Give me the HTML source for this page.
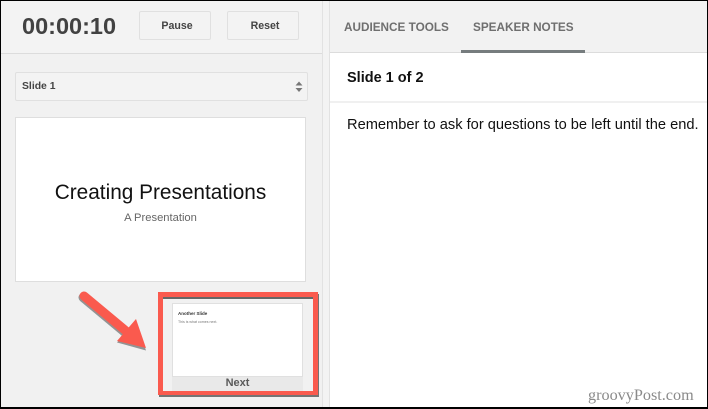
<!DOCTYPE html>
<html><head><meta charset="utf-8">
<style>
html,body{margin:0;padding:0;width:708px;height:409px;overflow:hidden;background:#fff}
body{position:relative;font-family:"Liberation Sans",sans-serif}
div{position:absolute;box-sizing:border-box;white-space:nowrap}
.btn{background:#f3f3f3;border:1px solid #e0e0e0;border-radius:2px;font-size:10.6px;font-weight:bold;color:#444;text-align:center}
</style></head><body>
<div style="left:0;top:0;width:322px;height:409px;background:#f1f1f1"></div>
<div style="left:322px;top:0;width:8px;height:409px;background:#f3f3f3;border-left:1px solid #e2e2e2;border-right:1px solid #e2e2e2"></div>
<div style="left:330px;top:0;width:378px;height:53px;background:#f2f2f2;border-bottom:1px solid #dcdcdc"></div>
<div style="left:0;top:0;width:322px;height:54px;border-bottom:1px solid #dcdcdc;background:#f3f3f3"></div>

<div style="left:22px;top:11px;font-size:23.5px;line-height:30px;font-weight:bold;color:#424242">00:00:10</div>
<div class="btn" style="left:139px;top:11px;width:72px;height:29px;line-height:28px;padding-left:4px">Pause</div>
<div class="btn" style="left:227px;top:11px;width:72px;height:29px;line-height:28px;padding-left:4px">Reset</div>

<div class="btn" style="left:15px;top:72px;width:293px;height:29px;line-height:28px;text-align:left;padding-left:6px;font-size:10.4px">Slide 1</div>
<svg style="position:absolute;left:293px;top:80px" width="12" height="14" viewBox="0 0 12 14"><path d="M2.5 5.5L6 1.5 9.5 5.5Z M2.5 8L6 12 9.5 8Z" fill="#777"/></svg>

<div style="left:15px;top:117px;width:291px;height:165px;background:#fff;border:1px solid #dedede"></div>
<div style="left:15px;top:180px;width:291px;text-align:center;font-size:20.8px;line-height:26px;color:#111">Creating Presentations</div>
<div style="left:15px;top:211px;width:291px;text-align:center;font-size:11.2px;line-height:15px;color:#666">A Presentation</div>

<svg style="position:absolute;left:70px;top:285px" width="90" height="70" viewBox="0 0 90 70">
<path d="M14 11L56 46" stroke="#555" stroke-width="9" stroke-linecap="round" fill="none" opacity=".6" transform="translate(-1 1.5)"/>
<path d="M66 34L47 56 76 64Z" fill="#555" opacity=".6" transform="translate(0 1.5)"/>
<path d="M14 11L56 46" stroke="#fa5a4e" stroke-width="9" stroke-linecap="round" fill="none"/>
<path d="M66 34L47 56 76 63Z" fill="#fa5a4e"/>
</svg>

<div style="left:159px;top:294px;width:160px;height:103px;background:#555;opacity:.8"></div>
<div style="left:163px;top:297px;width:150px;height:94px;background:#f1f1f1"></div>
<div style="left:163px;top:297px;width:150px;height:2px;background:#666"></div>
<div style="left:172px;top:303px;width:131px;height:74px;background:#fff;border:1px solid #e0e0e0"></div>
<div style="left:178px;top:311px;font-size:4.5px;line-height:6px;color:#333;font-weight:bold">Another Slide</div>
<div style="left:178px;top:320px;font-size:3.6px;line-height:5px;color:#777">This is what comes next.</div>
<div style="left:172px;top:377px;width:131px;height:14px;background:#e9e9e9;text-align:center;font-size:11px;line-height:13px;font-weight:bold;color:#5a5a5a">Next</div>
<div style="left:158px;top:292px;width:160px;height:103px;border:5px solid #fa5a4e;border-bottom-width:4px"></div>

<div style="left:344px;top:20px;font-size:11.75px;line-height:15px;font-weight:bold;color:#6f6f6f">AUDIENCE TOOLS</div>
<div style="left:473px;top:20px;font-size:11.75px;line-height:15px;font-weight:bold;color:#6f6f6f">SPEAKER NOTES</div>
<div style="left:461px;top:50px;width:124px;height:3px;background:#767c7e"></div>

<div style="left:347px;top:70px;font-size:14.5px;line-height:17px;font-weight:bold;color:#111">Slide 1 of 2</div>
<div style="left:330px;top:101px;width:378px;height:2px;background:#f0f0f0"></div>
<div style="left:347px;top:117px;font-size:14.65px;line-height:17px;color:#111">Remember to ask for questions to be left until the end.</div>

<div style="left:588px;top:386px;font-family:'Liberation Serif',serif;font-size:16.2px;line-height:18px;color:#8a8a8a">groovyPost.com</div>

<div style="left:0;top:0;width:708px;height:1px;background:#000"></div>
<div style="left:0;top:0;width:1px;height:409px;background:#000"></div>
<div style="left:707px;top:0;width:1px;height:409px;background:#000"></div>
<div style="left:0;top:407px;width:708px;height:2px;background:#000"></div>
</body></html>
